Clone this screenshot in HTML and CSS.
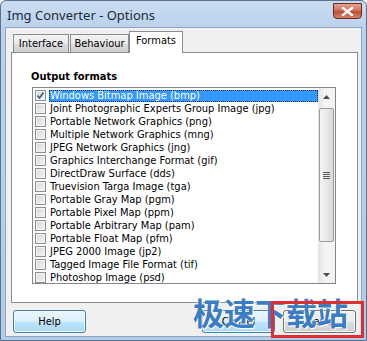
FILE: index.html
```html
<!DOCTYPE html>
<html lang="en">
<head>
  <meta charset="UTF-8">
  <title>Img Converter - Options</title>
  <link rel="stylesheet" href="styles.css">
</head>
<body>
  <div class="window">
    <div class="titlebar">
      <span class="title">Img Converter - Options</span>
      <span class="close">
        <svg width="13" height="9" viewBox="0 0 13 9"><path d="M2 1 L11 8 M11 1 L2 8" stroke="#fff" stroke-width="2.4" stroke-linecap="square"/></svg>
      </span>
    </div>

    <div class="client">
      <div class="tabs">
        <div class="tab tab-interface">Interface</div>
        <div class="tab tab-behaviour">Behaviour</div>
        <div class="tab tab-active">Formats</div>
      </div>

      <div class="panel">
        <div class="group-title">Output formats</div>
        <div class="listbox">
          <div class="list">
            <div class="item selected"><span class="check checked"><svg width="9" height="9" viewBox="0 0 9 9"><path d="M1.5 4.5 L3.5 7 L7.5 1.5" stroke="#3c5a8c" stroke-width="1.6" fill="none"/></svg></span><span class="label">Windows Bitmap Image (bmp)</span></div>
            <div class="item"><span class="check"></span><span class="label">Joint Photographic Experts Group Image (jpg)</span></div>
            <div class="item"><span class="check"></span><span class="label">Portable Network Graphics (png)</span></div>
            <div class="item"><span class="check"></span><span class="label">Multiple Network Graphics (mng)</span></div>
            <div class="item"><span class="check"></span><span class="label">JPEG Network Graphics (jng)</span></div>
            <div class="item"><span class="check"></span><span class="label">Graphics Interchange Format (gif)</span></div>
            <div class="item"><span class="check"></span><span class="label">DirectDraw Surface (dds)</span></div>
            <div class="item"><span class="check"></span><span class="label">Truevision Targa Image (tga)</span></div>
            <div class="item"><span class="check"></span><span class="label">Portable Gray Map (pgm)</span></div>
            <div class="item"><span class="check"></span><span class="label">Portable Pixel Map (ppm)</span></div>
            <div class="item"><span class="check"></span><span class="label">Portable Arbitrary Map (pam)</span></div>
            <div class="item"><span class="check"></span><span class="label">Portable Float Map (pfm)</span></div>
            <div class="item"><span class="check"></span><span class="label">JPEG 2000 Image (jp2)</span></div>
            <div class="item"><span class="check"></span><span class="label">Tagged Image File Format (tif)</span></div>
            <div class="item"><span class="check"></span><span class="label">Photoshop Image (psd)</span></div>
          </div>
          <div class="scrollbar">
            <div class="sb-btn"><svg width="7" height="4" viewBox="0 0 7 4"><path d="M0 4 L3.5 0 L7 4 Z" fill="#4d4d4d"/></svg></div>
            <div class="sb-track">
              <div class="sb-thumb">
                <span class="grip"></span>
              </div>
            </div>
            <div class="sb-btn"><svg width="7" height="4" viewBox="0 0 7 4"><path d="M0 0 L3.5 4 L7 0 Z" fill="#4d4d4d"/></svg></div>
          </div>
        </div>
      </div>

      <div class="footer">
        <button class="btn btn-hot">Help</button>
        <div class="right-buttons">
          <button class="btn btn-hot">Cancel</button>
          <button class="btn">Save</button>
        </div>
      </div>
    </div>

    <div class="watermark">极速下载站</div>
    <div class="redbox"></div>
  </div>
</body>
</html>
```

FILE: styles.css
```css
body {
  margin: 0;
  width: 367px;
  height: 341px;
  overflow: hidden;
  background: #ffffff;
  font-family: "DejaVu Sans Condensed", "DejaVu Sans", sans-serif;
  font-size: 11px;
  color: #000;
}
.window {
  position: relative;
  width: 367px;
  height: 341px;
  box-sizing: border-box;
  border: 1px solid #5a7391;
  border-radius: 6px 6px 0 0;
  background: linear-gradient(180deg, #c9dcf1 0px, #bcd2ec 27px, #b4cbe6 100%);
  display: flex;
  flex-direction: column;
}
.titlebar {
  height: 26px;
  display: flex;
  align-items: center;
  justify-content: space-between;
  padding: 0 4px 0 6px;
}
.title {
  font-family: "Noto Sans", sans-serif;
  font-size: 13px;
  color: #1e2a38;
  margin-top: 1px;
}
.close {
  width: 27px;
  height: 14px;
  margin-top: -6px;
  border: 1px solid #6b2a22;
  border-radius: 0 0 4px 4px;
  background: linear-gradient(180deg, #e6a394 0%, #d1715e 45%, #c04a33 55%, #d7826a 100%);
  display: flex;
  align-items: center;
  justify-content: center;
}
.client {
  flex: 1;
  margin: 0 4px 3px 4px;
  background: #f0f0f0;
  border: 1px solid #8da5c4;
  padding: 3px 3px 0 5px;
  display: flex;
  flex-direction: column;
}
.tabs {
  display: flex;
  align-items: flex-end;
  height: 21px;
  padding-left: 2px;
  position: relative;
  z-index: 1;
}
.tab {
  height: 18px;
  box-sizing: border-box;
  border: 1px solid #898c95;
  border-bottom: none;
  background: linear-gradient(180deg, #f2f2f2 0%, #ebebeb 50%, #dddddd 51%, #cfcfcf 100%);
  padding: 2px 0 0 0;
  text-align: center;
}
.tab-interface {
  width: 56px;
}
.tab-behaviour {
  width: 59px;
  margin-left: 1px;
}
.tab-active {
  width: 54px;
  height: 22px;
  margin-bottom: -1px;
  background: #ffffff;
  padding-top: 2px;
}
.panel {
  height: 251px;
  box-sizing: border-box;
  border: 1px solid #898c95;
  background: #ffffff;
  padding: 17px 21px 0 19px;
}
.group-title {
  font-weight: bold;
  line-height: 13px;
  height: 17px;
}
.listbox {
  height: 197px;
  box-sizing: border-box;
  border: 1px solid #828790;
  margin-left: 1px;
  display: flex;
  overflow: hidden;
}
.list {
  flex: 1;
  padding-top: 1px;
  overflow: hidden;
}
.item {
  height: 13px;
  display: flex;
  align-items: center;
  padding-left: 2px;
  white-space: nowrap;
}
.check {
  width: 11px;
  height: 11px;
  box-sizing: border-box;
  border: 1px solid #8e8f8f;
  background: linear-gradient(135deg, #d8d8d8 0%, #f4f4f4 100%);
  box-shadow: inset 0 0 0 1px #f4f4f4;
  margin-right: 3px;
  flex-shrink: 0;
  display: flex;
  align-items: center;
  justify-content: center;
}
.check svg {
  display: block;
}
.label {
  padding: 0 1px;
  line-height: 12px;
}
.selected .label {
  flex: 1;
  background: #3399ff;
  color: #ffffff;
  outline: 1px dotted #0a2a5a;
  outline-offset: -1px;
}
.scrollbar {
  width: 17px;
  display: flex;
  flex-direction: column;
  background: linear-gradient(90deg, #e3e3e3 0%, #f4f4f4 40%, #f4f4f4 100%);
}
.sb-btn {
  height: 17px;
  display: flex;
  align-items: center;
  justify-content: center;
}
.sb-track {
  flex: 1;
  padding: 3px 1px;
  display: flex;
  flex-direction: column;
}
.sb-thumb {
  height: 134px;
  box-sizing: border-box;
  border: 1px solid #9b9b9b;
  border-radius: 2px;
  background: linear-gradient(90deg, #f4f4f4 0%, #e9e9e9 50%, #d7d7d7 100%);
  display: flex;
  align-items: center;
  justify-content: center;
}
.grip {
  width: 7px;
  height: 7px;
  background: repeating-linear-gradient(180deg, #5a5a5a 0px, #5a5a5a 1px, #e9e9e9 1px, #e9e9e9 2px);
}
.footer {
  display: flex;
  justify-content: space-between;
  padding: 7px 2px 0 2px;
}
.right-buttons {
  display: flex;
  gap: 8px;
}
.btn {
  width: 73px;
  height: 23px;
  font-family: "DejaVu Sans Condensed", "DejaVu Sans", sans-serif;
  font-size: 11px;
  color: #000;
  border: 1px solid #707070;
  border-radius: 3px;
  background: linear-gradient(180deg, #f2f2f2 0%, #ebebeb 50%, #dddddd 51%, #cfcfcf 100%);
  box-shadow: inset 0 0 0 1px #fafafa;
  padding: 0;
}
.btn-hot {
  border-color: #3c7fb1;
  background: linear-gradient(180deg, #eaf6fd 0%, #d9f0fc 50%, #bee6fd 51%, #a7d9f5 100%);
  box-shadow: inset 0 0 0 1px #f4fbff;
}
.watermark {
  position: absolute;
  left: 192px;
  top: 291px;
  font-family: "Noto Sans CJK SC", sans-serif;
  font-size: 31px;
  font-weight: bold;
  line-height: 40px;
  letter-spacing: 0px;
  color: #3c7cc4;
  text-shadow: 0 0 2px #ffffff, 1px 1px 0 #ffffff;
}
.redbox {
  position: absolute;
  left: 270px;
  top: 300px;
  width: 87px;
  height: 31px;
  border: 3px solid #e12d2f;
}
```
